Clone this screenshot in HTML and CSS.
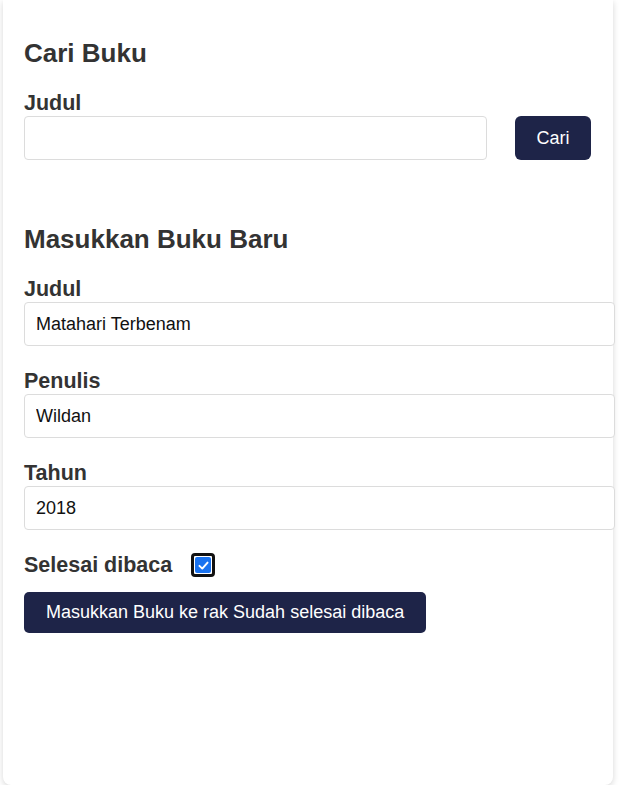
FILE: index.html
```html
<!DOCTYPE html>
<html lang="id">
<head>
<meta charset="utf-8">
<title>Bookshelf</title>
<link rel="stylesheet" href="styles.css">
</head>
<body>
  <main class="card">
    <section class="search-section">
      <h2 class="heading">Cari Buku</h2>
      <form class="search-form">
        <label class="label" for="searchTitle">Judul</label>
        <div class="search-row">
          <input class="input search-input" id="searchTitle" type="text">
          <button class="btn btn-search" type="button">Cari</button>
        </div>
      </form>
    </section>

    <section class="input-section">
      <h2 class="heading">Masukkan Buku Baru</h2>
      <form class="book-form">
        <div class="field">
          <label class="label" for="title">Judul</label>
          <input class="input wide-input" id="title" type="text" value="Matahari Terbenam">
        </div>
        <div class="field">
          <label class="label" for="author">Penulis</label>
          <input class="input wide-input" id="author" type="text" value="Wildan">
        </div>
        <div class="field">
          <label class="label" for="year">Tahun</label>
          <input class="input wide-input" id="year" type="text" value="2018">
        </div>
        <div class="check-row">
          <span class="label">Selesai dibaca</span>
          <span class="checkbox">
            <span class="checkbox-box">
              <svg viewBox="0 0 16 16" width="13" height="13"><path d="M3 8.5 L6.5 11.8 L13 4.5" fill="none" stroke="#fff" stroke-width="2.4" stroke-linecap="round" stroke-linejoin="round"/></svg>
            </span>
          </span>
        </div>
        <button class="btn btn-submit" type="button">Masukkan Buku ke rak Sudah selesai dibaca</button>
      </form>
    </section>
  </main>
</body>
</html>
```

FILE: styles.css
```css
* {
  box-sizing: border-box;
}

html, body {
  margin: 0;
  padding: 0;
  background: #ffffff;
}

body {
  font-family: "Liberation Sans", Arial, sans-serif;
  color: #333333;
}

.card {
  width: 610px;
  min-height: 785px;
  margin-left: 3px;
  padding: 38px 22px 0 21px;
  background: #ffffff;
  border-radius: 0 0 8px 8px;
  box-shadow: 0 2px 6px rgba(0, 0, 0, 0.16);
}

.heading {
  margin: 0 0 23px 0;
  font-size: 26px;
  line-height: 30px;
  font-weight: bold;
  color: #333333;
}

.search-section {
  margin-bottom: 64px;
}

.label {
  display: block;
  font-size: 21.5px;
  line-height: 24px;
  font-weight: bold;
  color: #333333;
}

.input {
  display: block;
  height: 44px;
  margin-top: 1px;
  padding: 0 11px;
  font-family: "Liberation Sans", Arial, sans-serif;
  font-size: 18px;
  color: #111111;
  background: #ffffff;
  border: 1px solid #dcdcdc;
  border-radius: 4px;
  outline: none;
}

.search-row {
  display: flex;
  gap: 28px;
  margin-top: 1px;
}

.search-row .input {
  margin-top: 0;
  flex: 1;
  min-width: 0;
}

.wide-input {
  width: calc(100% + 24px);
}

.field {
  margin-bottom: 23px;
}

.btn {
  font-family: "Liberation Sans", Arial, sans-serif;
  font-size: 18px;
  color: #ffffff;
  background: #1e2448;
  border: none;
  cursor: pointer;
}

.btn-search {
  flex: none;
  width: 76px;
  height: 44px;
  border-radius: 6px;
  padding: 0;
}

.check-row {
  display: flex;
  align-items: center;
  gap: 19px;
  height: 24px;
}

.checkbox {
  display: flex;
  align-items: center;
  justify-content: center;
  width: 24px;
  height: 24px;
  border: 3px solid #111111;
  border-radius: 4px;
  background: #ffffff;
}

.checkbox-box {
  display: flex;
  align-items: center;
  justify-content: center;
  width: 16px;
  height: 16px;
  border-radius: 2px;
  background: #1a73f0;
}

.btn-submit {
  display: block;
  margin-top: 15px;
  height: 41px;
  padding: 0 22px;
  border-radius: 5px;
}
```
